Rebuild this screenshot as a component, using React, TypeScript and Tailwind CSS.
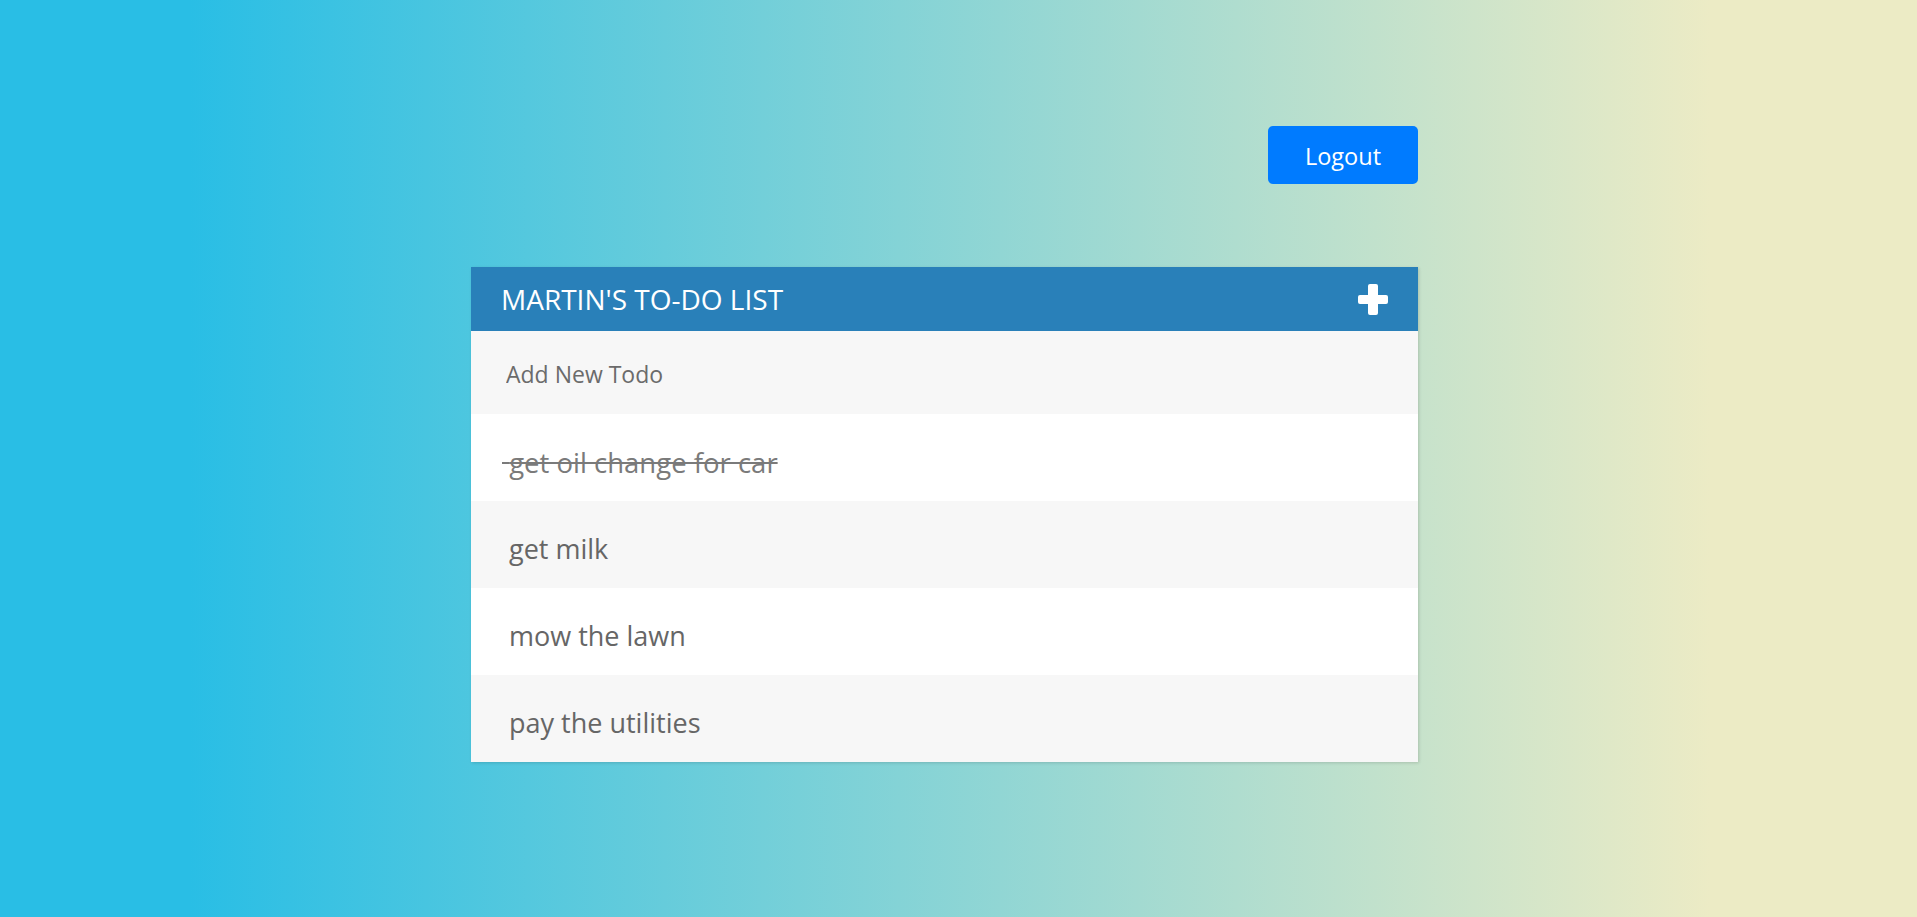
import { useState } from 'react';

type Todo = {
  id: number;
  text: string;
  done: boolean;
};

const initialTodos: Todo[] = [
  { id: 1, text: 'get oil change for car', done: true },
  { id: 2, text: 'get milk', done: false },
  { id: 3, text: 'mow the lawn', done: false },
  { id: 4, text: 'pay the utilities', done: false },
];

function PlusIcon() {
  return (
    <svg width="30" height="31" viewBox="0 0 30 31" fill="white">
      <rect x="10" y="0" width="10" height="31" rx="2" />
      <rect x="0" y="11" width="30" height="9" rx="2" />
    </svg>
  );
}

export default function App() {
  const [todos, setTodos] = useState<Todo[]>(initialTodos);
  const [newTodo, setNewTodo] = useState('');

  // 切换完成状态
  function toggleTodo(id: number) {
    setTodos(prev => prev.map(t => (t.id === id ? { ...t, done: !t.done } : t)));
  }

  function handleKeyDown(e: React.KeyboardEvent<HTMLInputElement>) {
    if (e.key === 'Enter' && newTodo.trim()) {
      setTodos(prev => [...prev, { id: Date.now(), text: newTodo.trim(), done: false }]);
      setNewTodo('');
    }
  }

  return (
    <div className="min-h-[938px] w-full bg-[linear-gradient(to_right,#29bee5_190px,#ecebc5_1710px)] font-['Open_Sans',sans-serif]">
      <div className="w-[947px] ml-[471px] pt-[126px]">
        {/* 顶部按钮 */}
        <div className="flex justify-end">
          <button className="w-[150px] h-[58px] pt-[3px] rounded-[5px] bg-[#007bff] text-white text-[23.5px] leading-none">
            Logout
          </button>
        </div>

        {/* 列表卡片 */}
        <div className="mt-[83px] bg-white shadow-[1px_1px_3px_rgba(0,0,0,0.15)]">
          <div className="h-[64px] bg-[#2980b9] flex items-center justify-between pl-[30px] pr-[30px]">
            <h1 className="text-white text-[28px] leading-none">MARTIN'S TO-DO LIST</h1>
            <PlusIcon />
          </div>

          <div className="h-[83px] bg-[#f7f7f7]">
            <input
              value={newTodo}
              onChange={e => setNewTodo(e.target.value)}
              onKeyDown={handleKeyDown}
              placeholder="Add New Todo"
              className="w-full h-full bg-transparent outline-none pl-[35px] pt-[3px] text-[23px] text-[#666] placeholder:text-[#6b6b6b]"
            />
          </div>

          <ul>
            {todos.map((todo, index) => (
              <li
                key={todo.id}
                onClick={() => toggleTodo(todo.id)}
                className={`h-[87px] flex items-center pt-[10px] text-[27px] cursor-pointer ${index % 2 === 1 ? 'bg-[#f7f7f7]' : 'bg-white'} ${todo.done ? 'pl-[31px]' : 'pl-[38px]'}`}
              >
                {todo.done ? (
                  <span className="line-through text-[#7a7a7a] text-[27.5px]">{'\u00a0'}{todo.text}</span>
                ) : (
                  <span className="text-[#666]">{todo.text}</span>
                )}
              </li>
            ))}
          </ul>
        </div>
      </div>
    </div>
  );
}
